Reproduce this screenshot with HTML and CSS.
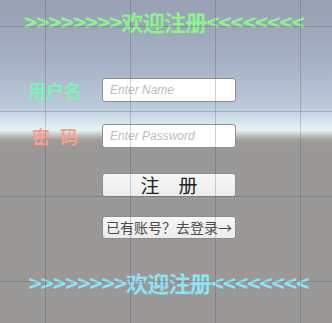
FILE: index.html
```html
<!DOCTYPE html>
<html lang="zh-CN">
<head>
    <meta charset="UTF-8">
    <meta name="viewport" content="width=device-width, initial-scale=1.0">
    <title>欢迎注册</title>
    <link rel="stylesheet" href="styles.css">
</head>
<body>
    <div class="scene">
        <h1 class="title title-top">&gt;&gt;&gt;&gt;&gt;&gt;&gt;&gt;欢迎注册&lt;&lt;&lt;&lt;&lt;&lt;&lt;&lt;</h1>

        <form class="register-form">
            <div class="row">
                <label class="label label-name" for="name">用户名</label>
                <input type="text" id="name" placeholder="Enter Name">
            </div>
            <div class="row">
                <label class="label label-pwd" for="pwd">密 码</label>
                <input type="password" id="pwd" placeholder="Enter Password">
            </div>
            <button type="button" class="btn btn-register">注&emsp;册</button>
            <button type="button" class="btn btn-login">已有账号？去登录→</button>
        </form>

        <h1 class="title title-bottom">&gt;&gt;&gt;&gt;&gt;&gt;&gt;&gt;欢迎注册&lt;&lt;&lt;&lt;&lt;&lt;&lt;&lt;</h1>

        <!-- scene grid drawn over everything -->
        <div class="grid"></div>
    </div>
</body>
</html>
```

FILE: styles.css
```css
body {
    margin: 0;
    padding: 0;
    font-family: "Noto Sans CJK SC", "Noto Sans", sans-serif;
}

.scene {
    position: relative;
    width: 332px;
    height: 323px;
    overflow: hidden;
    display: flex;
    flex-direction: column;
    background: linear-gradient(to bottom,
        #98a0b2 0px,
        #a5b0c4 60px,
        #bac9da 106px,
        #d6e6ee 122px,
        #e6f4f5 130px,
        #c3c6c6 135px,
        #a09e9c 140px,
        #9b9997 147px,
        #9b9997 100%);
}

.title {
    margin: 0;
    font-size: 22px;
    line-height: 24px;
    font-weight: 700;
    letter-spacing: -0.8px;
    text-align: center;
    white-space: nowrap;
}

.title-top {
    margin-top: 9px;
    padding-right: 4px;
    color: #8ef38a;
}

.title-bottom {
    margin-top: 31px;
    padding-left: 5px;
    color: #8ee4f6;
}

.register-form {
    margin-top: 45px;
    display: flex;
    flex-direction: column;
    align-items: flex-start;
}

.row {
    display: flex;
    align-items: center;
    height: 24px;
    padding-left: 28px;
}

.row + .row {
    margin-top: 22px;
}

.label {
    width: 54px;
    margin-right: 20px;
    font-size: 18px;
    font-weight: 700;
    text-align: center;
    white-space: nowrap;
}

.label-name {
    color: #80f1b4;
}

.label-pwd {
    color: #f6a08f;
    word-spacing: 6px;
}

input {
    width: 134px;
    height: 24px;
    box-sizing: border-box;
    padding: 0 7px;
    border: 1px solid #8e8e8e;
    border-radius: 3px;
    background-color: #fff;
    font-family: "Liberation Sans", Arial, sans-serif;
    font-size: 12px;
    outline: none;
}

input::placeholder {
    color: #bdbdbd;
    font-style: italic;
}

.btn {
    margin-left: 102px;
    width: 134px;
    box-sizing: border-box;
    padding: 0;
    border: 1px solid #8e8e8e;
    border-radius: 3px;
    background: linear-gradient(to bottom, #f7f7f7, #ececec);
    font-family: "Noto Sans CJK SC", sans-serif;
    white-space: nowrap;
    cursor: pointer;
}

.btn-register {
    margin-top: 25px;
    height: 24px;
    font-size: 19px;
    line-height: 22px;
    color: #222;
}

.btn-login {
    margin-top: 19px;
    height: 23px;
    font-size: 14px;
    line-height: 21px;
    color: #4a4a4a;
}

.grid {
    position: absolute;
    inset: 0;
    pointer-events: none;
    background-image:
        linear-gradient(to right, rgba(60, 66, 78, 0.24) 1px, transparent 1px),
        linear-gradient(to bottom, rgba(60, 66, 78, 0.24) 1px, transparent 1px);
    background-size: 85px 85px;
    background-position: 45px 26px;
}
```
